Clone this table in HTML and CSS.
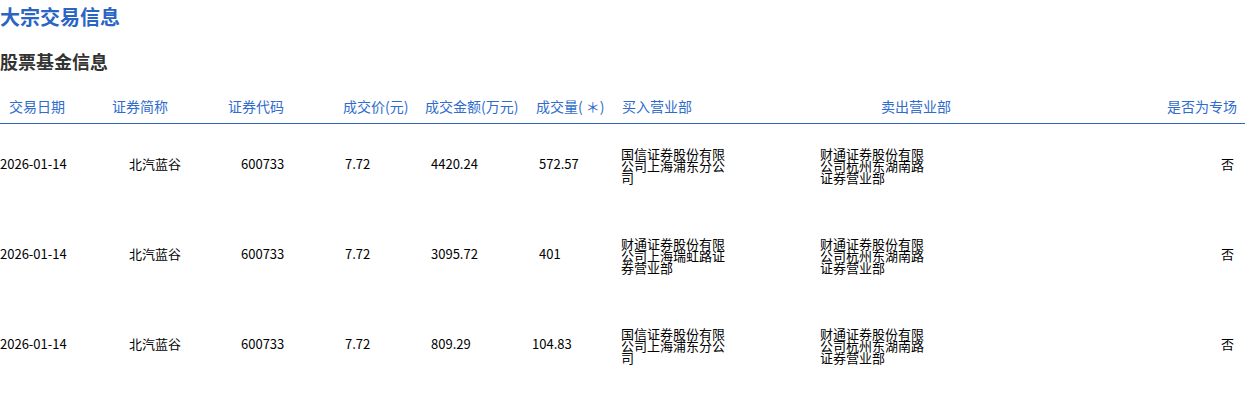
FILE: index.html
```html
<!DOCTYPE html>
<html lang="zh-CN">

<head>
    <meta charset="UTF-8">
    <meta name="viewport" content="width=device-width, initial-scale=1.0">
    <title>大宗交易信息</title>
    <link rel="stylesheet" href="styles.css">
</head>

<body>
    <h1 class="page-title">大宗交易信息</h1>
    <h2 class="section-title">股票基金信息</h2>

    <div class="trade-table">
        <!-- header -->
        <div class="trade-head">
            <div class="th first">交易日期</div>
            <div class="th">证券简称</div>
            <div class="th">证券代码</div>
            <div class="th">成交价(元)</div>
            <div class="th">成交金额(万元)</div>
            <div class="th">成交量( ＊)</div>
            <div class="th">买入营业部</div>
            <div class="th">卖出营业部</div>
            <div class="th last">是否为专场</div>
        </div>

        <div class="trade-row">
            <div class="td">2026-01-14</div>
            <div class="td">北汽蓝谷</div>
            <div class="td">600733</div>
            <div class="td">7.72</div>
            <div class="td">4420.24</div>
            <div class="td">572.57</div>
            <div class="td wrap"><span class="dept">国信证券股份有限公司上海浦东分公司</span></div>
            <div class="td wrap"><span class="dept">财通证券股份有限公司杭州东湖南路证券营业部</span></div>
            <div class="td last">否</div>
        </div>

        <div class="trade-row">
            <div class="td">2026-01-14</div>
            <div class="td">北汽蓝谷</div>
            <div class="td">600733</div>
            <div class="td">7.72</div>
            <div class="td">3095.72</div>
            <div class="td">401</div>
            <div class="td wrap"><span class="dept">财通证券股份有限公司上海瑞虹路证券营业部</span></div>
            <div class="td wrap"><span class="dept">财通证券股份有限公司杭州东湖南路证券营业部</span></div>
            <div class="td last">否</div>
        </div>

        <div class="trade-row">
            <div class="td">2026-01-14</div>
            <div class="td">北汽蓝谷</div>
            <div class="td">600733</div>
            <div class="td">7.72</div>
            <div class="td">809.29</div>
            <div class="td shift">104.83</div>
            <div class="td wrap"><span class="dept">国信证券股份有限公司上海浦东分公司</span></div>
            <div class="td wrap"><span class="dept">财通证券股份有限公司杭州东湖南路证券营业部</span></div>
            <div class="td last">否</div>
        </div>
    </div>
</body>

</html>
```

FILE: styles.css
```css
body {
    margin: 0;
    font-family: "Noto Sans CJK SC", "Noto Sans", sans-serif;
    color: #000;
    background: #fff;
}

.page-title {
    margin: 0;
    font-size: 20px;
    line-height: 34px;
    font-weight: bold;
    color: #2a64c4;
}

.section-title {
    margin: 13px 0 0;
    font-size: 18px;
    line-height: 28px;
    font-weight: bold;
    color: #333;
}

.trade-head {
    display: grid;
    grid-template-columns: 112px 116px 115px 82px 111px 86px 259px 1fr auto;
    padding: 21px 0 7px;
    border-bottom: 1px solid #2f64b8;
    font-size: 14px;
    line-height: 20px;
    color: #2f6ccb;
}

.th.first {
    padding-left: 9px;
}

.th.last {
    padding-right: 8px;
    text-align: right;
}

.trade-row {
    display: grid;
    grid-template-columns: 129px 112px 104px 86px 108px 82px 199px 1fr auto;
    align-items: center;
    height: 90px;
    padding-bottom: 6px;
    box-sizing: border-box;
    font-size: 13px;
    line-height: 16px;
}

.td {
    margin-bottom: 4px;
}

.td.wrap {
    margin-bottom: 0;
}

.td.last {
    padding-right: 11px;
    text-align: right;
}

.td.shift {
    margin-left: -7px;
}

.dept {
    display: block;
    width: 105px;
    line-height: 12px;
}
```
